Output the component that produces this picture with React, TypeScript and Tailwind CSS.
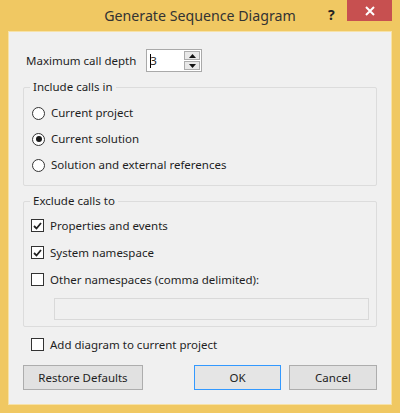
import React from 'react';

const font = { fontFamily: '"Segoe UI", "Noto Sans", "Open Sans", sans-serif' };

function Radio({ checked, label }: { checked?: boolean; label: string }) {
  return (
    <div className="flex h-[26px] items-center">
      <span className="flex h-[13px] w-[13px] items-center justify-center rounded-full border border-[#333] bg-white">
        {checked && <span className="h-[6px] w-[6px] rounded-full bg-[#1a1a1a]" />}
      </span>
      <span className="ml-[6px]">{label}</span>
    </div>
  );
}

function Check({ checked, label }: { checked?: boolean; label: string }) {
  return (
    <div className="flex h-[27px] items-center">
      <span className="flex h-[13px] w-[13px] items-center justify-center border border-[#333] bg-white">
        {checked && (
          <svg width="9" height="8" viewBox="0 0 9 8">
            <path d="M1 4 L3.5 6.5 L8 1" fill="none" stroke="#222" strokeWidth="1.8" />
          </svg>
        )}
      </span>
      <span className="ml-[6px]">{label}</span>
    </div>
  );
}

function Group({ title, children, className }: { title: string; children: React.ReactNode; className?: string }) {
  return (
    <div className={'relative rounded-[2px] border border-[#dcdcdc] ' + (className ?? '')}>
      <span className="absolute left-[6px] top-[-10px] bg-[#f0f0f0] px-[3px] leading-[18px]">{title}</span>
      {children}
    </div>
  );
}

export default function App() {
  return (
    <div className="h-[413px] w-[400px] bg-[#f0c862] text-[11.5px] text-[#1e1e1e]" style={font}>
      <div className="relative flex h-[31px] items-center justify-center">
        <span className="text-[14.2px] text-[#333]">Generate Sequence Diagram</span>
        <span className="absolute left-[328px] top-[4px] text-[14px] font-bold text-[#222]">?</span>
        <div className="absolute right-[8px] top-0 flex h-[21px] w-[45px] items-center justify-center bg-[#c75050]">
          <svg width="10" height="10" viewBox="0 0 10 10">
            <path d="M1 1 L9 9 M9 1 L1 9" stroke="white" strokeWidth="2" />
          </svg>
        </div>
      </div>
      <div className="mx-[8px] h-[374px] border border-[#f7e2a8] bg-[#f0f0f0] px-[14px]">
        <div className="mt-[17px] flex items-center">
          <span className="ml-[3px]">Maximum call depth</span>
          <div className="ml-[10px] flex h-[23px] w-[56px] border border-[#a9a9a9] bg-white">
            <span className="flex flex-1 items-center pl-[3px]">
              <span className="mr-[-1px] h-[14px] w-px bg-black" />3
            </span>
            <div className="my-[1px] mr-[1px] flex w-[16px] flex-col gap-px">
              <div className="flex flex-1 items-center justify-center border border-[#acacac] bg-[#e8e8e8]">
                <svg width="7" height="4" viewBox="0 0 7 4"><path d="M0 4 L3.5 0 L7 4Z" fill="#111" /></svg>
              </div>
              <div className="flex flex-1 items-center justify-center border border-[#acacac] bg-[#e8e8e8]">
                <svg width="7" height="4" viewBox="0 0 7 4"><path d="M0 0 L3.5 4 L7 0Z" fill="#111" /></svg>
              </div>
            </div>
          </div>
        </div>
        <Group title="Include calls in" className="mt-[15px] h-[99px] pl-[8px] pt-[12px]">
          <Radio label="Current project" />
          <Radio checked label="Current solution" />
          <Radio label="Solution and external references" />
        </Group>
        <Group title="Exclude calls to" className="mt-[15px] h-[126px] pl-[7px] pt-[10px]">
          <Check checked label="Properties and events" />
          <Check checked label="System namespace" />
          <Check label="Other namespaces (comma delimited):" />
          <div className="ml-[23px] mr-[7px] mt-[5px] h-[22px] border border-[#d9d9d9] bg-[#f0f0f0]" />
        </Group>
        <div className="ml-[8px] mt-[4px]">
          <Check label="Add diagram to current project" />
        </div>
        <div className="mt-[7px] flex">
          <button className="h-[25px] w-[120px] border border-[#adadad] bg-[#e1e1e1]" style={font}>Restore Defaults</button>
          <button className="ml-auto h-[25px] w-[87px] border border-[#3399ff] bg-[#e5e5e5]" style={font}>OK</button>
          <button className="ml-[8px] h-[25px] w-[88px] border border-[#adadad] bg-[#e1e1e1]" style={font}>Cancel</button>
        </div>
      </div>
    </div>
  );
}
